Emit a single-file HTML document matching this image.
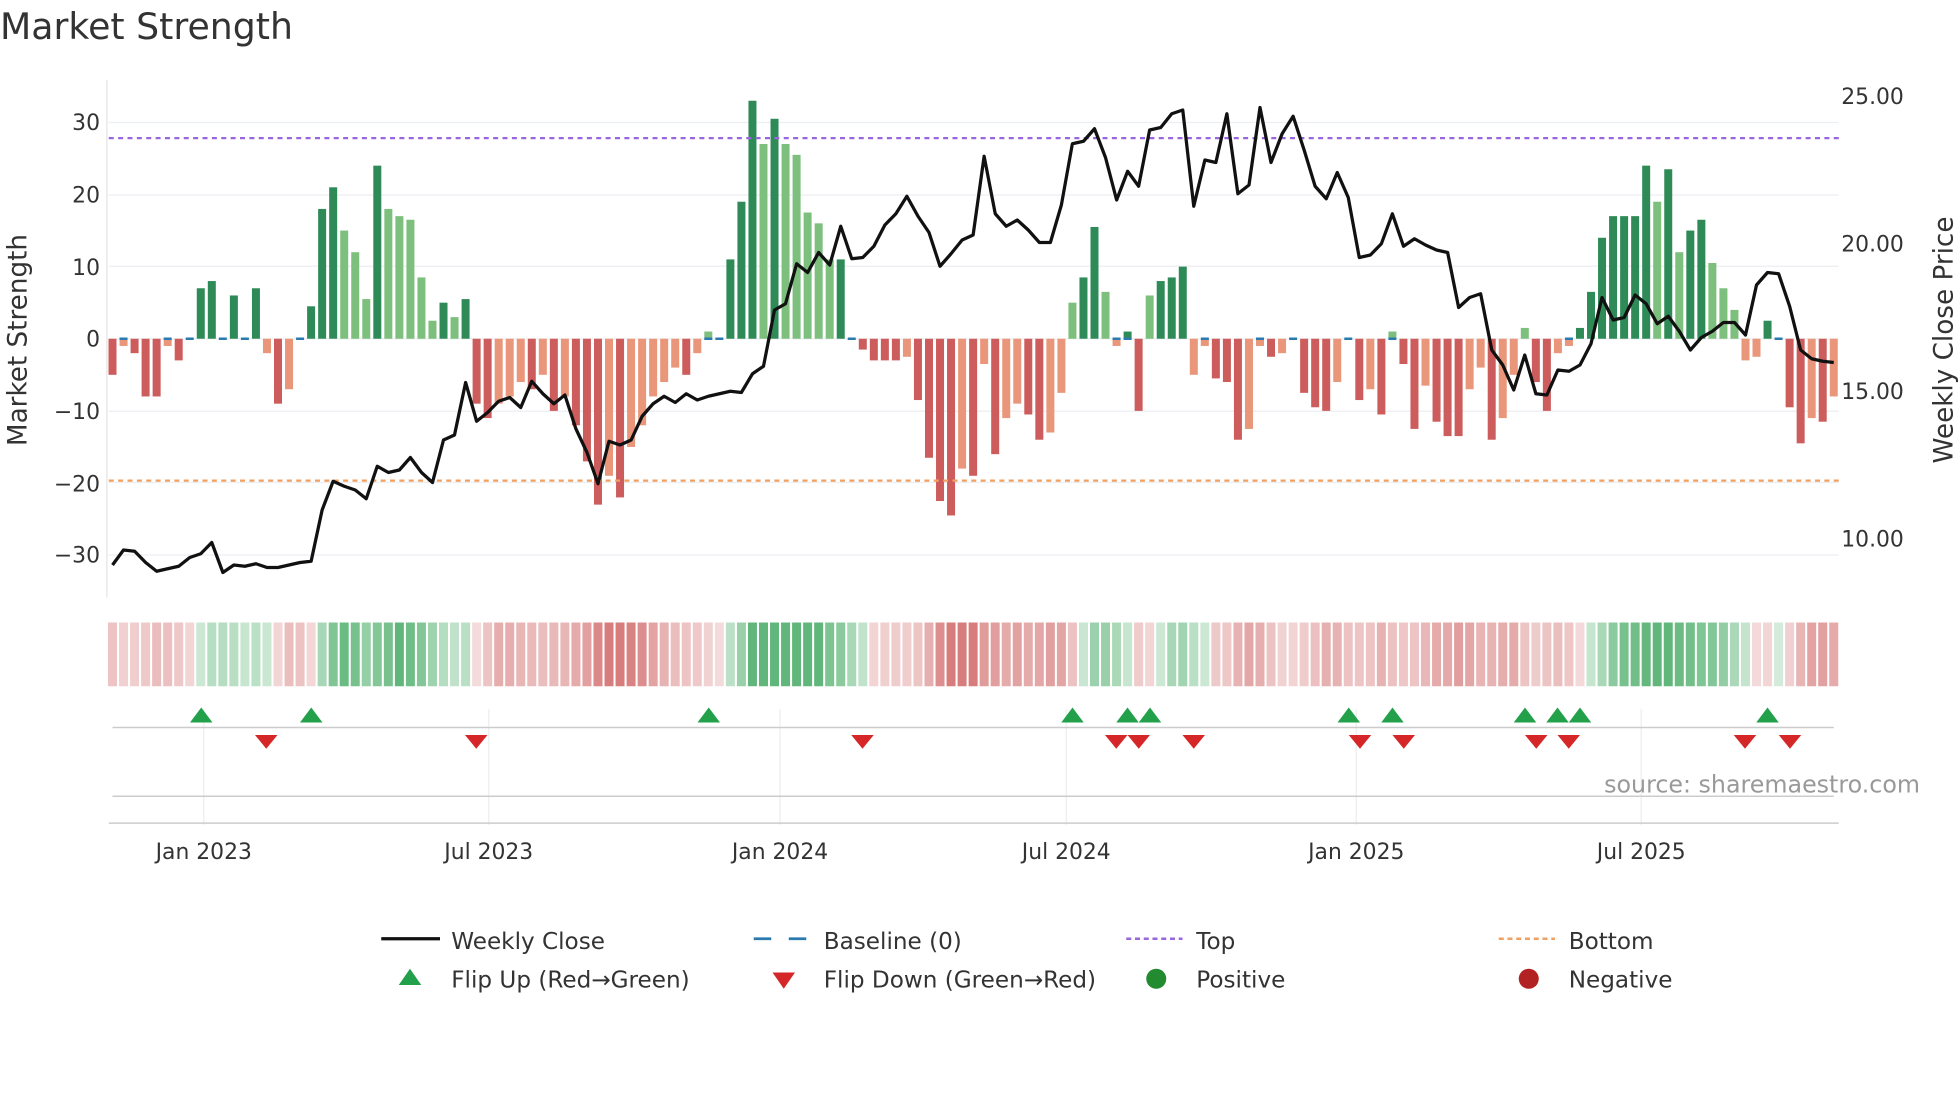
<!DOCTYPE html>
<html><head><meta charset="utf-8"><style>
html,body{margin:0;padding:0;background:#fff;width:1960px;height:1102px;overflow:hidden}
svg{display:block}
text{font-family:"DejaVu Sans","Liberation Sans",sans-serif;fill:#333}
</style></head><body>
<svg id="s" width="1960" height="1102" viewBox="0 0 1568 881.6" xmlns="http://www.w3.org/2000/svg">
<text x="0" y="31" font-size="29">Market Strength</text>
<g id="grid"></g>
<g id="heat"></g>
<g id="bars"></g>
<line x1="87" y1="110.5" x2="1471" y2="110.5" stroke="#9966dd" stroke-width="1.8" stroke-dasharray="4,3.5"/>
<line x1="87" y1="384.5" x2="1471" y2="384.5" stroke="#f0a060" stroke-width="1.8" stroke-dasharray="4,3.5"/>
<polyline id="price" fill="none" stroke="#111" stroke-width="2.6" stroke-linejoin="round"/>
<g id="marks"></g>
<g font-size="17.5">
<text x="80" y="104" text-anchor="end">30</text>
<text x="80" y="162" text-anchor="end">20</text>
<text x="80" y="220" text-anchor="end">10</text>
<text x="80" y="277" text-anchor="end">0</text>
<text x="80" y="335" text-anchor="end">−10</text>
<text x="80" y="393" text-anchor="end">−20</text>
<text x="80" y="450" text-anchor="end">−30</text>
<text x="1473" y="83">25.00</text>
<text x="1473" y="201">20.00</text>
<text x="1473" y="319">15.00</text>
<text x="1473" y="437">10.00</text>
<text font-size="21" transform="translate(21,272) rotate(-90)" text-anchor="middle">Market Strength</text>
<text font-size="21" transform="translate(1562,272) rotate(-90)" text-anchor="middle">Weekly Close Price</text>
<text x="163" y="687" text-anchor="middle" font-size="17.5">Jan 2023</text>
<text x="391" y="687" text-anchor="middle" font-size="17.5">Jul 2023</text>
<text x="624" y="687" text-anchor="middle" font-size="17.5">Jan 2024</text>
<text x="853" y="687" text-anchor="middle" font-size="17.5">Jul 2024</text>
<text x="1085" y="687" text-anchor="middle" font-size="17.5">Jan 2025</text>
<text x="1313" y="687" text-anchor="middle" font-size="17.5">Jul 2025</text>
<text x="1536" y="634" text-anchor="end" font-size="19" style="fill:#999">source: sharemaestro.com</text>
</g>
<g font-size="18.5">
<line x1="305" y1="751" x2="352" y2="751" stroke="#111" stroke-width="2.6"/>
<text x="361" y="759">Weekly Close</text>
<line x1="603" y1="751" x2="617" y2="751" stroke="#2a7ab0" stroke-width="2.2"/>
<line x1="631" y1="751" x2="645" y2="751" stroke="#2a7ab0" stroke-width="2.2"/>
<text x="659" y="759">Baseline (0)</text>
<line x1="901" y1="751" x2="946" y2="751" stroke="#9966dd" stroke-width="2" stroke-dasharray="4,3"/>
<text x="957" y="759">Top</text>
<line x1="1199" y1="751" x2="1244" y2="751" stroke="#f0a060" stroke-width="2" stroke-dasharray="4,3"/>
<text x="1255" y="759">Bottom</text>
<polygon points="319,788 337,788 328,775" fill="#22a04a"/>
<text x="361" y="790">Flip Up (Red→Green)</text>
<polygon points="618,778 636,778 627,791" fill="#d62728"/>
<text x="659" y="790">Flip Down (Green→Red)</text>
<circle cx="925" cy="783" r="8" fill="#228b30"/>
<text x="957" y="790">Positive</text>
<circle cx="1223" cy="783" r="8" fill="#b22222"/>
<text x="1255" y="790">Negative</text>
</g>
</svg>
<script>
var NS="http://www.w3.org/2000/svg";
function el(p,t,a){var e=document.createElementNS(NS,t);for(var k in a)e.setAttribute(k,a[k]);document.getElementById(p).appendChild(e);return e;}
var v=[-5,-1,-2,-8,-8,-1,-3,0,7,8,0.5,6,0,7,-2,-9,-7,0,4.5,18,21,15,12,5.5,24,18,17,16.5,8.5,2.5,5,3,5.5,-9,-11,-9,-8,-6,-7,-5,-10,-8,-12,-17,-23,-19,-22,-15,-12,-8,-6,-4,-5,-2,1,0.5,11,19,33,27,30.5,27,25.5,17.5,16,11,11,0,-1.5,-3,-3,-3,-2.5,-8.5,-16.5,-22.5,-24.5,-18,-19,-3.5,-16,-11,-9,-10.5,-14,-13,-7.5,5,8.5,15.5,6.5,-1,1,-10,6,8,8.5,10,-5,-1,-5.5,-6,-14,-12.5,-1,-2.5,-2,0,-7.5,-9.5,-10,-6,0.5,-8.5,-7,-10.5,1,-3.5,-12.5,-6.5,-11.5,-13.5,-13.5,-7,-4,-14,-11,-5,1.5,-6,-10,-2,-1,1.5,6.5,14,17,17,17,24,19,23.5,12,15,16.5,10.5,7,4,-3,-2.5,2.5,0,-9.5,-14.5,-11,-11.5,-8];
var py=[452,440,441,450,457,455,453,446,443,434,458,452,453,451,454,454,452,450,449,408,385,389,392,399,373,378,376,366,378,386,352,348,306,337,330,321,318,326,305,315,323,316,343,362,387,353,356,352,333,323,317,322,315,320,317,315,313,314,299,293,248,243,211,218,202,212,181,207,206,197,180,171,157,173,186,213,203,192,188,125,171,181,176,184,194,194,164,115,113,103,126,160,137,149,104,102,91,88,165,128,130,91,155,148,86,130,107,93,120,149,159,138,158,206,204,195,171,197,191,196,200,202,246,238,235,280,292,312,284,315,316,296,297,292,275,238,256,254,236,243,259,253,265,280,270,265,258,258,268,228,218,219,245,280,287,289,290];
var n=v.length, step=(1467-90)/(n-1);
function X(i){return 90+i*step;}
[98,156,213,271,329,386,444].forEach(function(y){el("grid","line",{x1:87,x2:1471,y1:y,y2:y,stroke:"#eceef2","stroke-width":1});});
el("grid","line",{x1:85.5,x2:85.5,y1:64,y2:478,stroke:"#e4e4e4","stroke-width":1});
[163,391,624,853,1085,1313].forEach(function(x){el("grid","line",{x1:x,x2:x,y1:567,y2:660,stroke:"#eee","stroke-width":1});});
el("grid","line",{x1:90,x2:1467,y1:582,y2:582,stroke:"#ccc","stroke-width":1.2});
el("grid","line",{x1:90,x2:1467,y1:637,y2:637,stroke:"#ccc","stroke-width":1.2});
el("grid","line",{x1:87,x2:1471,y1:658.5,y2:658.5,stroke:"#ccc","stroke-width":1.2});
var w=6.4;
for(var i=0;i<n;i++){
  var x=X(i),val=v[i],prev=i?v[i-1]:0;
  var dark=Math.abs(val)>=Math.abs(prev);
  if(Math.abs(val)>0.6){
    var col=val>0?(dark?"#2e8b57":"#7dbf7d"):(dark?"#cd5c5c":"#e9967a");
    var y0=271,y1=271-val*5.77;
    el("bars","rect",{x:x-w/2,y:Math.min(y0,y1),width:w,height:Math.abs(y1-y0),fill:col});
  }
  if(Math.abs(val)<1.5){el("bars","rect",{x:x-w/2,y:270,width:w,height:2,fill:"#2a7ab0"});}
  var s=(v[i]+(i?v[i-1]:v[i])+(i>1?v[i-2]:v[i]))/3;
  var a=Math.min(0.8,0.22+Math.abs(s)/34);
  el("heat","rect",{x:x-3.6,y:498,width:7.2,height:51,fill:s>=0?"#3aa55a":"#cd5c5c","fill-opacity":a});
}
var pts=[];for(var i=0;i<py.length;i++)pts.push(X(i).toFixed(1)+","+py[i]);
document.getElementById("price").setAttribute("points",pts.join(" "));
[161,249,567,858,902,920,1079,1114,1220,1246,1264,1414].forEach(function(x){el("marks","polygon",{points:(x-9)+",578 "+(x+9)+",578 "+x+",566",fill:"#22a04a"});});
[213,381,690,893,911,955,1088,1123,1229,1255,1396,1432].forEach(function(x){el("marks","polygon",{points:(x-9)+",588 "+(x+9)+",588 "+x+",599",fill:"#d62728"});});
</script>
</body></html>
